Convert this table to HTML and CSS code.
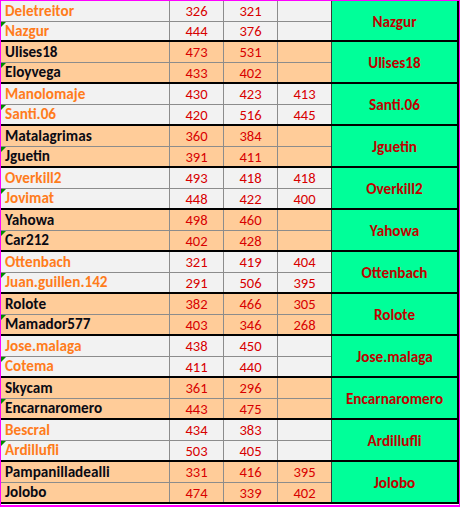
FILE: index.html
```html
<!DOCTYPE html>
<html>
<head>
<meta charset="utf-8">
<link rel="stylesheet" href="styles.css">
</head>
<body>
<div class="frame">
<div class="sheet">

<div class="group grey first">
  <div class="name">Deletreitor</div><div class="num">326</div><div class="num">321</div><div class="num"></div>
  <div class="win">Nazgur</div>
  <div class="name mark">Nazgur</div><div class="num">444</div><div class="num">376</div><div class="num"></div>
</div>

<div class="group peach">
  <div class="name">Ulises18</div><div class="num">473</div><div class="num">531</div><div class="num"></div>
  <div class="win">Ulises18</div>
  <div class="name mark">Eloyvega</div><div class="num">433</div><div class="num">402</div><div class="num"></div>
</div>

<div class="group grey">
  <div class="name">Manolomaje</div><div class="num">430</div><div class="num">423</div><div class="num">413</div>
  <div class="win">Santi.06</div>
  <div class="name mark">Santi.06</div><div class="num">420</div><div class="num">516</div><div class="num">445</div>
</div>

<div class="group peach">
  <div class="name">Matalagrimas</div><div class="num">360</div><div class="num">384</div><div class="num"></div>
  <div class="win">Jguetin</div>
  <div class="name mark">Jguetin</div><div class="num">391</div><div class="num">411</div><div class="num"></div>
</div>

<div class="group grey">
  <div class="name">Overkill2</div><div class="num">493</div><div class="num">418</div><div class="num">418</div>
  <div class="win">Overkill2</div>
  <div class="name mark">Jovimat</div><div class="num">448</div><div class="num">422</div><div class="num">400</div>
</div>

<div class="group peach">
  <div class="name">Yahowa</div><div class="num">498</div><div class="num">460</div><div class="num"></div>
  <div class="win">Yahowa</div>
  <div class="name mark">Car212</div><div class="num">402</div><div class="num">428</div><div class="num"></div>
</div>

<div class="group grey">
  <div class="name">Ottenbach</div><div class="num">321</div><div class="num">419</div><div class="num">404</div>
  <div class="win">Ottenbach</div>
  <div class="name mark">Juan.guillen.142</div><div class="num">291</div><div class="num">506</div><div class="num">395</div>
</div>

<div class="group peach">
  <div class="name">Rolote</div><div class="num">382</div><div class="num">466</div><div class="num">305</div>
  <div class="win">Rolote</div>
  <div class="name mark">Mamador577</div><div class="num">403</div><div class="num">346</div><div class="num">268</div>
</div>

<div class="group grey">
  <div class="name">Jose.malaga</div><div class="num">438</div><div class="num">450</div><div class="num"></div>
  <div class="win">Jose.malaga</div>
  <div class="name mark">Cotema</div><div class="num">411</div><div class="num">440</div><div class="num"></div>
</div>

<div class="group peach">
  <div class="name">Skycam</div><div class="num">361</div><div class="num">296</div><div class="num"></div>
  <div class="win">Encarnaromero</div>
  <div class="name mark">Encarnaromero</div><div class="num">443</div><div class="num">475</div><div class="num"></div>
</div>

<div class="group grey">
  <div class="name">Bescral</div><div class="num">434</div><div class="num">383</div><div class="num"></div>
  <div class="win">Ardillufli</div>
  <div class="name mark">Ardillufli</div><div class="num">503</div><div class="num">405</div><div class="num"></div>
</div>

<div class="group peach">
  <div class="name">Pampanilladealli</div><div class="num">331</div><div class="num">416</div><div class="num">395</div>
  <div class="win">Jolobo</div>
  <div class="name">Jolobo</div><div class="num">474</div><div class="num">339</div><div class="num">402</div>
</div>

</div>
</div>
</body>
</html>
```

FILE: styles.css
```css
html, body {
  margin: 0;
  padding: 0;
  background: #ffffff;
}

.frame {
  width: 460px;
  box-sizing: border-box;
  border: 1px solid #ff00ff;
  border-bottom-width: 2px;
  padding-bottom: 1px;
  background: #ffffff;
  font-family: Carlito, Calibri, Lato, "Liberation Sans", sans-serif;
  font-size: 14.6px;
}

.sheet {
  border-right: 2px solid #000000;
}

.group {
  display: grid;
  grid-template-columns: 168px 53px 53px 53px 125px;
  grid-template-rows: 20px 19px;
  column-gap: 1px;
  row-gap: 1px;
  background: #8c8c8c;
  border-bottom: 2px solid #000000;
}

.group.first {
  grid-template-rows: 20px 18px;
}

.name, .num {
  display: flex;
  align-items: center;
  line-height: 1;
  white-space: nowrap;
}

.name {
  position: relative;
  padding-left: 4px;
  padding-top: 1px;
  font-weight: bold;
  font-size: 15.2px;
}

.num {
  justify-content: center;
  padding-top: 1px;
  color: #d80000;
}

.grey .name, .grey .num { background: #f2f2f2; }
.peach .name, .peach .num { background: #ffcc99; }

.grey .name { color: #ff7c1c; }
.peach .name { color: #0a0a14; }

.win {
  grid-column: 5;
  grid-row: 1 / span 2;
  display: flex;
  align-items: center;
  justify-content: center;
  background: #00ff99;
  box-shadow: -1px 0 0 #3a3a3a;
  color: #c00000;
  font-weight: bold;
  font-size: 15.2px;
  padding-top: 2px;
}

.mark::before {
  content: "";
  position: absolute;
  left: 0;
  top: 0;
  border-top: 5px solid #008a00;
  border-right: 5px solid transparent;
}
```
